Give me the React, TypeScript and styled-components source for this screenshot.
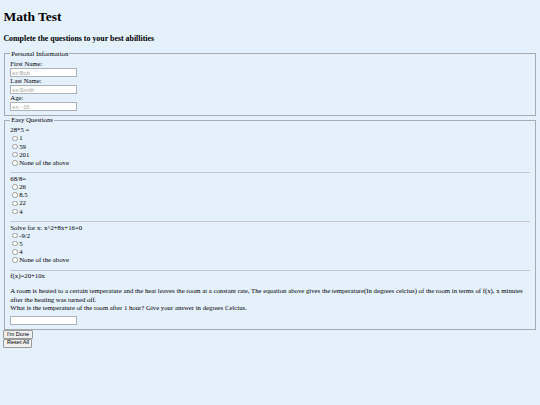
import React from 'react';
import styled, { createGlobalStyle } from 'styled-components';

const GlobalStyle = createGlobalStyle`
  html {
    background: #e5f0fd;
  }
  body {
    margin: 3.4px;
    font-family: "Liberation Serif", "Times New Roman", serif;
    font-size: 6.75px;
    line-height: 7.8px;
    color: #000;
    background: #e5f0fd;
  }
`;

const Title = styled.h1`
  font-size: 13.5px;
  line-height: 15.5px;
  font-weight: bold;
  margin: 6px 0 9px;
`;

const Subtitle = styled.h3`
  font-size: 7.9px;
  line-height: 9.1px;
  font-weight: bold;
  margin: 9px 0 6.9px;
`;

const Fieldset = styled.fieldset`
  margin: 0 0.85px;
  padding: 2.4px 5.1px 4.2px;
  border: 1px solid #a7abb0;
`;

const Legend = styled.legend`
  padding: 0 0.85px;
  line-height: 7.8px;
`;

const FieldLabel = styled.div`
  line-height: 8px;
`;

const TextInput = styled.input`
  display: block;
  box-sizing: border-box;
  width: 67px;
  height: 9px;
  margin: 0;
  padding: 0 1px;
  font-family: "Liberation Sans", Arial, sans-serif;
  font-size: 5.6px;
  border: 1px solid #aeb1b5;
  background: #fff;
  outline: none;
  &::placeholder {
    color: #a3a3a3;
  }
`;

const AnswerInput = styled(TextInput)`
  margin-top: 3px;
`;

const Prompt = styled.div`
  line-height: 7.8px;
`;

const Option = styled.label`
  display: flex;
  align-items: center;
  height: 8.2px;
`;

const Radio = styled.input`
  appearance: none;
  box-sizing: border-box;
  width: 5.5px;
  height: 5.5px;
  margin: 0 1.3px 0 2.1px;
  border: 1px solid #9a9a9a;
  border-radius: 50%;
  background: #fff;
`;

const Divider = styled.hr`
  height: 0;
  margin: 5.5px 0 1.5px;
  border: 0;
  border-top: 1px solid #c4c8cd;
`;

const Paragraph = styled.p`
  margin: 7.5px 0 0;
  line-height: 8.45px;
`;

const ButtonStack = styled.div`
  display: flex;
  flex-direction: column;
  align-items: flex-start;
`;

const Button = styled.button`
  box-sizing: border-box;
  height: 8.8px;
  padding: 0 2.5px;
  margin: 0;
  font-family: "Liberation Sans", Arial, sans-serif;
  font-size: 5.6px;
  line-height: 1;
  color: #000;
  background: #efefef;
  border: 1px solid #9b9b9b;
  border-radius: 1px;
`;

type Question = { prompt: string; options: string[] };

const questions: Question[] = [
  { prompt: '28*5 =', options: ['1', '59', '201', 'None of the above'] },
  { prompt: '68/8=', options: ['26', '8.5', '22', '4'] },
  { prompt: 'Solve for x: x^2+8x+16=0', options: ['-9/2', '5', '4', 'None of the above'] },
];

const App: React.FC = () => {
  return (
    <>
      <GlobalStyle />
      <Title>Math Test</Title>
      <Subtitle>Complete the questions to your best abillities</Subtitle>
      <form>
        <Fieldset>
          <Legend>Personal Information</Legend>
          <FieldLabel>First Name:</FieldLabel>
          <TextInput type="text" placeholder="ex:Bob" />
          <FieldLabel>Last Name:</FieldLabel>
          <TextInput type="text" placeholder="ex:Smith" />
          <FieldLabel>Age:</FieldLabel>
          <TextInput type="text" placeholder="ex: -15" />
        </Fieldset>
        <Fieldset>
          <Legend>Easy Questions</Legend>
          {questions.map((q, qi) => (
            <React.Fragment key={qi}>
              <Prompt>{q.prompt}</Prompt>
              {q.options.map((opt, oi) => (
                <Option key={oi}>
                  <Radio type="radio" name={`q${qi}`} />
                  {opt}
                </Option>
              ))}
              <Divider />
            </React.Fragment>
          ))}
          <Prompt>f(x)=20+10x</Prompt>
          <Paragraph>
            A room is heated to a certain temperature and the heat leaves the room at a constant rate, The equation above gives the temperature(In degrees celcius) of the room in terms of f(x), x minutes after the heating was turned off.<br />
            What is the temperature of the room after 1 hour? Give your answer in degrees Celcius.
          </Paragraph>
          <AnswerInput type="text" />
        </Fieldset>
        <ButtonStack>
          <Button type="button">I'm Done</Button>
          <Button type="reset">Reset All</Button>
        </ButtonStack>
      </form>
    </>
  );
};

export default App;
